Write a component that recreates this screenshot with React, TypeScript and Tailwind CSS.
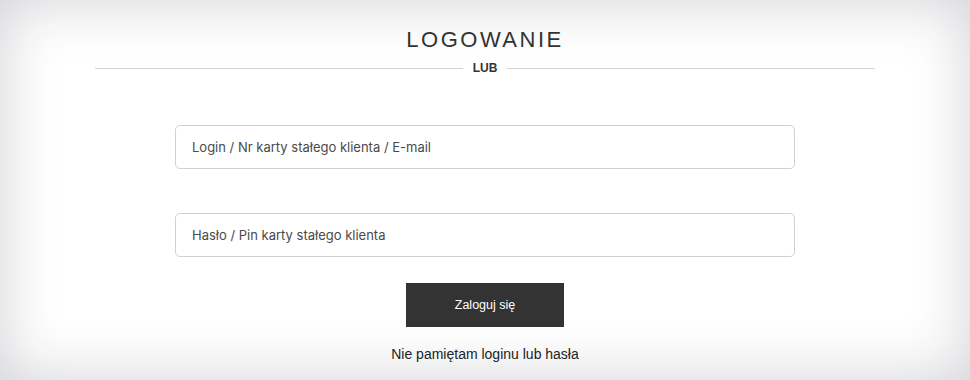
export default function App() {
  return (
    <div className="flex h-[380px] w-full flex-col items-center bg-white pt-[27px] shadow-[inset_0_0_60px_rgba(20,25,40,0.2)] font-['Liberation_Sans',Arial,sans-serif]">
      <h1 className="text-[22px] leading-[26px] tracking-[2.5px] text-[#333]">LOGOWANIE</h1>

      <div className="mt-[8px] flex h-[14px] w-[780px] items-center gap-[10px]">
        <div className="h-px flex-1 bg-[#d2d2d2]" />
        <span className="text-[12px] font-bold leading-none text-[#333]">LUB</span>
        <div className="h-px flex-1 bg-[#d2d2d2]" />
      </div>

      <input
        className="mt-[50px] h-[44px] w-[620px] rounded-[5px] border border-[#d0d0d0] bg-white px-4 font-['Inter',sans-serif] text-[13px] text-[#333] outline-none placeholder:text-[#4a4a4a]"
        placeholder="Login / Nr karty stałego klienta / E-mail"
      />
      <input
        type="password"
        className="mt-[44px] h-[44px] w-[620px] rounded-[5px] border border-[#d0d0d0] bg-white px-4 font-['Inter',sans-serif] text-[13px] text-[#333] outline-none placeholder:text-[#4a4a4a]"
        placeholder="Hasło / Pin karty stałego klienta"
      />

      <button className="mt-[26px] h-[44px] w-[158px] bg-[#333] text-[12.5px] text-white">Zaloguj się</button>

      <a className="mt-[18px] text-[14px] leading-[18px] text-[#222]">Nie pamiętam loginu lub hasła</a>
    </div>
  )
}
